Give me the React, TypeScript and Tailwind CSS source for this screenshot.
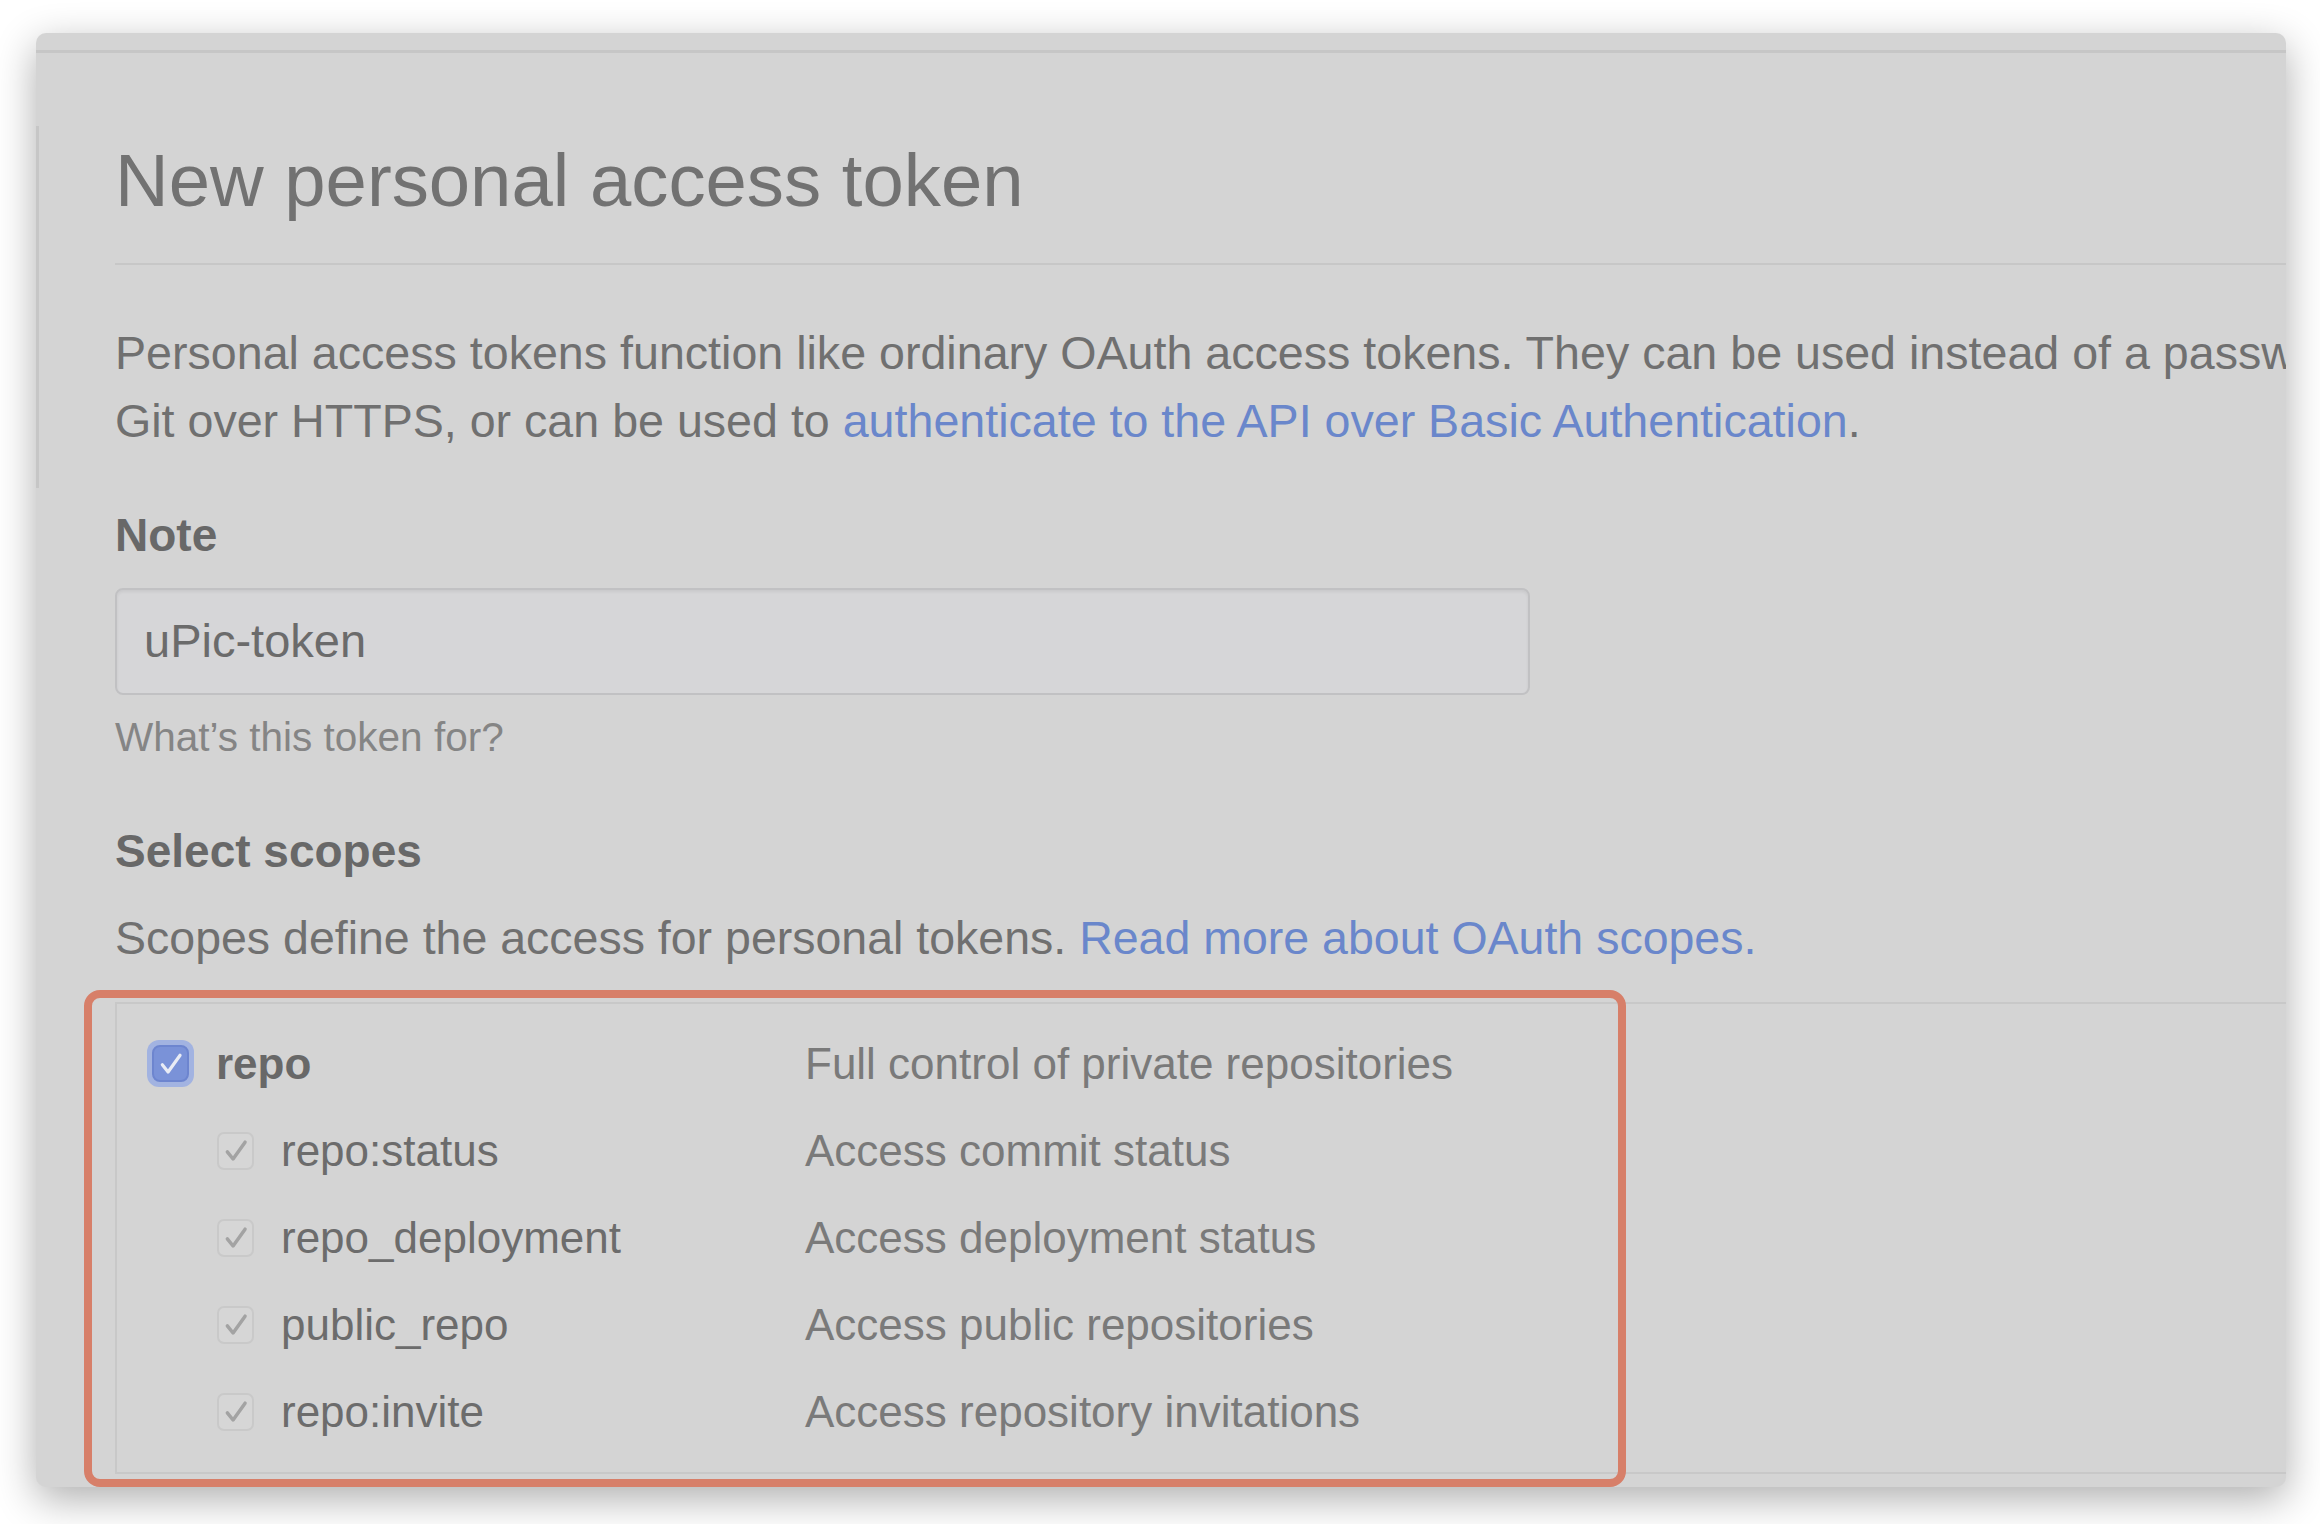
const Check = ({ color, size, width }: { color: string; size: number; width: number }) => (
	<svg width={size} height={size} viewBox="0 0 24 24" fill="none">
		<path
			d="M5.5 12.6 L9.8 18 L18.8 5.4"
			stroke={color}
			strokeWidth={width}
			strokeLinecap="round"
			strokeLinejoin="round"
		/>
	</svg>
);

const scopes = [
	{ name: "repo:status", desc: "Access commit status" },
	{ name: "repo_deployment", desc: "Access deployment status" },
	{ name: "public_repo", desc: "Access public repositories" },
	{ name: "repo:invite", desc: "Access repository invitations" },
];

const App = () => {
	return (
		<div className="w-[2320px] h-[1524px] bg-white pt-[33px] pl-[36px] font-['Liberation_Sans',Arial,sans-serif]">
			<div className="relative w-[2250px] h-[1454px] bg-[#d4d4d4] rounded-[10px] overflow-hidden shadow-[0_12px_40px_rgba(0,0,0,0.32)]">
				{/* window top strip */}
				<div className="h-[20px] border-b-[3px] border-[#c6c6c6]" />
				<div className="absolute left-0 top-[93px] h-[362px] w-[3px] bg-[#c6c6c6]" />

				<div className="w-[2500px] pl-[79px] flex flex-col">
					<div className="mt-[80px] pb-[34px] border-b-2 border-[#c7c7c7]">
						<h1 className="text-[74.3px] leading-[96px] text-[#727272] font-normal">
							New personal access token
						</h1>
					</div>

					<p className="mt-[54px] text-[46.6px] leading-[68px] text-[#707070] whitespace-nowrap">
						Personal access tokens function like ordinary OAuth access tokens. They can be used instead of a password for
						<br />
						Git over HTTPS, or can be used to{" "}
						<span className="text-[#6a87cb]">authenticate to the API over Basic Authentication</span>.
					</p>

					<div className="mt-[46px] text-[46px] leading-[68px] font-bold text-[#686868]">Note</div>
					<div className="mt-[19px] w-[1415px] h-[107px] rounded-[8px] border-2 border-[#c1c1c3] bg-[#d6d6d8] shadow-[inset_0_2px_3px_rgba(0,0,0,0.06)] flex items-center pl-[27px]">
						<span className="text-[47px] text-[#6b6b6b]">uPic-token</span>
					</div>
					<div className="mt-[12px] text-[40.5px] leading-[60px] text-[#858585]">What’s this token for?</div>

					<div className="mt-[50px] text-[46px] leading-[68px] font-bold text-[#686868]">Select scopes</div>
					<p className="mt-[19px] text-[46.5px] leading-[68px] text-[#707070] whitespace-nowrap">
						Scopes define the access for personal tokens.{" "}
						<span className="text-[#6a87cb]">Read more about OAuth scopes.</span>
					</p>

					<div className="mt-[30px] border-t-2 border-b-2 border-l-2 border-[#c8c8c8] pt-[16px] pb-[17px] text-[44px] text-[#6c6c6c]">
						<div className="h-[87px] flex items-center pl-[30px]">
							<div className="w-[658px] flex items-center gap-[22px]">
								<div className="w-[47px] h-[47px] rounded-[12px] bg-[#a2b3e1] p-[5px]">
									<div className="w-full h-full rounded-[8px] bg-[#7a92d8] border-2 border-[#6d85cf] flex items-center justify-center">
										<Check color="#e9ecf5" size={32} width={2.4} />
									</div>
								</div>
								<span className="font-bold text-[#686868]">repo</span>
							</div>
							<span className="text-[#7a7a7a]">Full control of private repositories</span>
						</div>
						{scopes.map((s) => (
							<div key={s.name} className="h-[87px] flex items-center pl-[100px]">
								<div className="w-[588px] flex items-center gap-[27px]">
									<div className="w-[37px] h-[38px] rounded-[7px] border-2 border-[#c9c9c9] bg-[#d6d6d6] flex items-center justify-center">
										<Check color="#a3a3a3" size={32} width={2.6} />
									</div>
									<span>{s.name}</span>
								</div>
								<span className="text-[#7a7a7a]">{s.desc}</span>
							</div>
						))}
					</div>
				</div>

				{/* annotation highlight */}
				<div className="absolute left-[48px] top-[957px] w-[1542px] h-[497px] border-[8px] border-[#d77f69] rounded-[16px]" />
			</div>
		</div>
	);
};

export default App;
